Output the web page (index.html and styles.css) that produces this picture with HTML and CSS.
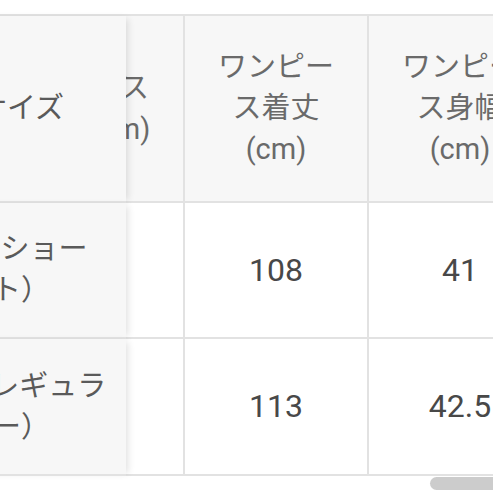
FILE: index.html
```html
<!DOCTYPE html>
<html lang="ja">
<head>
<meta charset="utf-8">
<title>サイズ表</title>
<link rel="stylesheet" href="styles.css">
</head>
<body>
<div class="page">
  <div class="grid">
    <div class="cell label head r1">サイズ</div>
    <div class="cell colb head r1">ウエス<br>ト(cm)</div>
    <div class="cell colc head r1">ワンピー<br>ス着丈<br>(cm)</div>
    <div class="cell cold head r1">ワンピー<br>ス身幅<br>(cm)</div>

    <div class="cell label r2">S（ショー<br>ト）</div>
    <div class="cell colb r2"></div>
    <div class="cell colc num r2">108</div>
    <div class="cell cold num r2">41</div>

    <div class="cell label r3">M（レギュラ<br>ー）</div>
    <div class="cell colb r3"></div>
    <div class="cell colc num r3">113</div>
    <div class="cell cold num r3">42.5</div>
  </div>
  <div class="scrollbar"></div>
</div>
</body>
</html>
```
FILE: styles.css
```css
html, body {
  margin: 0;
  padding: 0;
  background: #ffffff;
  width: 493px;
  height: 493px;
  overflow: hidden;
}

.page {
  width: 493px;
  height: 493px;
  overflow: hidden;
  font-family: Roboto, "Noto Sans CJK JP", sans-serif;
}

.grid {
  display: grid;
  margin-top: 14px;
  margin-left: -84px;
  border-top: 2px solid #e2e2e2;
  grid-template-columns: 112px 98px 59px 184px 184px;
  grid-template-rows: 187px 136px 137px;
}

.cell {
  box-sizing: border-box;
  display: flex;
  align-items: center;
  justify-content: center;
  text-align: center;
  white-space: nowrap;
  border-bottom: 2px solid #e2e2e2;
  font-size: 29px;
  line-height: 41px;
  color: #5e5e5e;
  background: #ffffff;
}

.r1 { grid-row: 1; }
.r2 { grid-row: 2; }
.r3 { grid-row: 3; }

.head {
  background: #f7f7f7;
  color: #6a6a6a;
}

.label {
  grid-column: 1 / 3;
  background: #f7f7f7;
  color: #5a5a5a;
  z-index: 2;
  box-shadow: 5px 0 7px -3px rgba(0, 0, 0, 0.12);
}

.colb {
  grid-column: 2 / 4;
  border-right: 2px solid #e2e2e2;
  z-index: 1;
}

.colc {
  grid-column: 4 / 5;
  border-right: 2px solid #e2e2e2;
}

.cold {
  grid-column: 5 / 6;
  border-right: 2px solid #e2e2e2;
}

.num {
  font-size: 32px;
  color: #484848;
}

.scrollbar {
  margin-top: 1px;
  margin-left: 430px;
  width: 80px;
  height: 13px;
  border-radius: 7px;
  background: #cccccc;
}
```
